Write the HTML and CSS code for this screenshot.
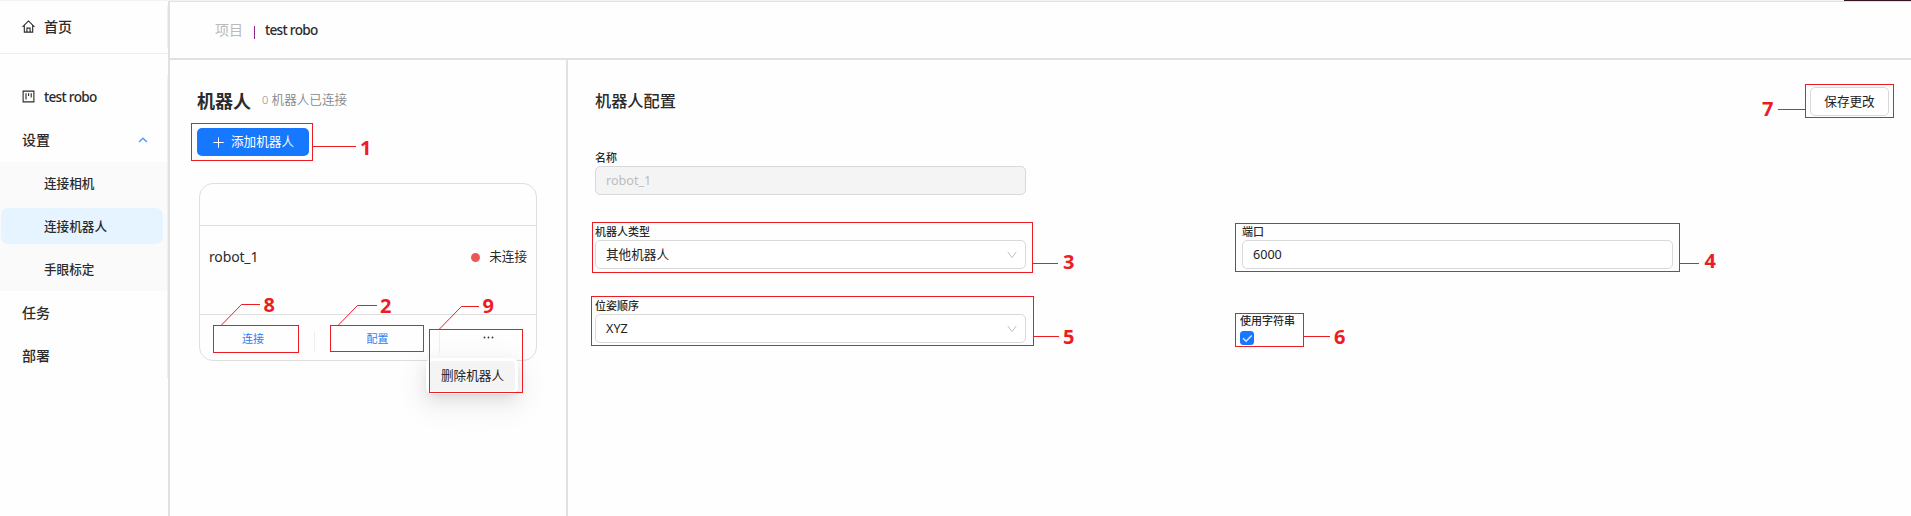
FILE: index.html
```html
<!DOCTYPE html>
<html lang="zh-CN">
<head>
<meta charset="utf-8">
<title>机器人配置</title>
<link rel="stylesheet" href="styles.css">
</head>
<body>
<div class="topline"><span class="topline-dark"></span></div>
<div class="app">
  <aside class="sidebar">
    <nav class="home-menu">
      <a class="item"><svg class="icon" viewBox="0 0 14 14"><path d="M.6 7.5 7 1l6.4 6.5M2.5 6v7h9V6M5.300 13V8.800h3.400V13"/></svg><span>首页</span></a>
    </nav>
    <nav class="main-menu">
      <a class="item"><svg class="icon" viewBox="0 0 14 14"><path d="M1.200 1.200h11.600v11.600H1.200zM4.300 3.500v6.600M7.100 3.500v3M9.900 3.500v4.600"/></svg><span class="latin">test robo</span></a>
      <a class="item group"><span>设置</span><svg class="caret" viewBox="0 0 10 6"><path d="M1 5l4-3.8L9 5"/></svg></a>
      <div class="submenu">
        <a class="subitem">连接相机</a>
        <a class="subitem selected">连接机器人</a>
        <a class="subitem">手眼标定</a>
      </div>
      <a class="item">任务</a>
      <a class="item">部署</a>
    </nav>
  </aside>
  <main class="main">
    <header class="header"><span class="crumb">项目</span><span class="sep"></span><span class="crumb-current latin">test robo</span></header>
    <div class="content">
      <section class="robots">
        <div class="robots-head"><h1>机器人</h1><span class="count"><small>0</small> 机器人已连接</span></div>
        <button class="add"><svg viewBox="0 0 11 11"><path d="M5.5 .3v10.4M.3 5.5h10.4"/></svg><span>添加机器人</span></button>
        <article class="card">
          <div class="card-head"></div>
          <div class="card-body"><span class="robot-name">robot_1</span><span class="status"><i class="dot"></i>未连接</span></div>
          <div class="card-actions">
            <a>连接</a><a>配置</a>
            <a class="more"><svg viewBox="0 0 11 3"><circle cx="1.5" cy="1.5" r=".9"/><circle cx="5.5" cy="1.5" r=".9"/><circle cx="9.5" cy="1.5" r=".9"/></svg></a>
            <div class="dropdown"><div class="dropdown-item">删除机器人</div></div>
          </div>
        </article>
      </section>
      <section class="config">
        <div class="config-head"><h2>机器人配置</h2><button class="save">保存更改</button></div>
        <form class="form">
          <div class="field wide"><label>名称</label><div class="control disabled">robot_1</div></div>
          <div class="field"><label>机器人类型</label><div class="control">其他机器人<svg class="arrow" viewBox="0 0 10 8"><path d="M.8 1 5 6.6 9.2 1"/></svg></div></div>
          <div class="field"><label>端口</label><div class="control">6000</div></div>
          <div class="field"><label>位姿顺序</label><div class="control">XYZ<svg class="arrow" viewBox="0 0 10 8"><path d="M.8 1 5 6.6 9.2 1"/></svg></div></div>
          <div class="field check-field"><label>使用字符串</label><span class="checkbox"><svg viewBox="0 0 14 14"><path d="M3 7.2l3.1 3.1L11.7 4.4"/></svg></span></div>
        </form>
      </section>
    </div>
  </main>
</div>
<svg class="notes" viewBox="0 0 1911 516">
  <g class="marks">
    <rect x="191.5" y="123.5" width="121" height="37"/><path d="M313 146.5h43"/>
    <rect x="330.5" y="325.5" width="93" height="26"/><path d="M338.500 325l19-19.500h19.500"/>
    <rect x="592.5" y="222.500" width="440" height="50"/><path d="M1033 263.500h25"/>
    <rect x="1235.500" y="223.500" width="444" height="48"/><path d="M1680 263.500h19"/>
    <rect x="591.500" y="296.500" width="442" height="49"/><path d="M1034 336.500h25"/>
    <rect x="1235.500" y="313.500" width="68" height="33"/><path d="M1304 336.500h26"/>
    <rect x="1805.500" y="84.500" width="88" height="33"/><path d="M1778 109.500h27"/>
    <rect x="213.500" y="325.500" width="85" height="27"/><path d="M221.500 325l20-20.500h18.500"/>
    <rect x="429.500" y="329.500" width="93" height="63"/><path d="M439.500 329l22-22.500h17.500"/>
  </g>
  <g class="numbers">
    <text x="360" y="155">1</text><text x="380" y="313">2</text><text x="1063" y="269">3</text>
    <text x="1704.500" y="268">4</text><text x="1063" y="344">5</text><text x="1334" y="344">6</text>
    <text x="1762" y="116">7</text><text x="263.500" y="312">8</text><text x="482.500" y="313">9</text>
  </g>
</svg>
</body>
</html>
```

FILE: styles.css
```css
* { box-sizing: border-box; }
body {
  margin: 0;
  width: 1911px;
  height: 516px;
  overflow: hidden;
  display: flex;
  flex-direction: column;
  background: #fefefe;
  color: #2b2b2b;
  font-family: "Noto Sans", "Noto Sans CJK SC", sans-serif;
  font-size: 12.6px;
  line-height: 20px;
}
h1, h2 { margin: 0; }
button { font: inherit; padding: 0; }
svg { display: block; fill: none; stroke: currentColor; flex: none; }

.topline { height: 1px; background: #f3f3f3; display: flex; justify-content: flex-end; }
.topline-dark { width: 67px; background: #351426; }
.app { flex: 1; display: flex; min-height: 0; }

.sidebar { width: 170px; border-right: 2px solid #e1e1e1; flex: none; }
.home-menu { height: 53px; padding: 4px 0 5px; border-bottom: 1px solid #eee; }
.home-menu .item { height: 43px; margin: 0; border-right: 1px solid #f0f0f0; }
.main-menu { margin-top: 21px; height: 303px; border-right: 1px solid #f0f0f0; }
.item {
  height: 43px;
  padding-left: 22px;
  display: flex;
  align-items: center;
  gap: 9px;
  font-size: 14px;
  font-weight: 500;
}
.icon { width: 13px; height: 13px; stroke-width: 1.2; }
.latin { font-size: 13.6px; letter-spacing: -.7px; }
.group { justify-content: space-between; padding-right: 19px; height: 44px; }
.caret { width: 10px; height: 6px; color: #4b9bff; stroke-width: 1.4; }
.submenu { height: 129px; background: #fafafa; padding-top: 3px; }
.subitem {
  display: flex;
  align-items: center;
  height: 36px;
  margin: 0 4px 7px 1px;
  padding: 1px 0 0 43px;
  border-radius: 7px;
  font-weight: 500;
}
.selected { background: #e6f4ff; }

.main { flex: 1; display: flex; flex-direction: column; min-width: 0; }
.header {
  height: 59px;
  border-top: 1px solid #e1e1e1;
  border-bottom: 2px solid #e1e1e1;
  padding: 0 0 1px 45px;
  display: flex;
  align-items: center;
  font-size: 14px;
}
.crumb { color: #bababa; }
.sep { width: 1px; height: 13px; background: #92278f; margin: 5px 10px 0 11px; }
.crumb-current { font-weight: 500; }
.content { flex: 1; display: flex; }

.robots { width: 398px; border-right: 2px solid #e1e1e1; padding: 30px 0 0 27px; flex: none; }
.robots-head { display: flex; align-items: center; gap: 11px; height: 22px; }
h1 { font-size: 18px; font-weight: 700; line-height: 22px; }
.count { color: #888; font-weight: 350; padding-bottom: 2px; }
.count small { font-size: 11px; }
.add {
  width: 112px;
  height: 28px;
  margin-top: 16px;
  padding-left: 16px;
  border: 0;
  border-radius: 5px;
  background: #1677ff;
  color: #fff;
  display: flex;
  align-items: center;
  gap: 7px;
}
.add svg { width: 11px; height: 11px; }
.card { width: 338px; height: 178px; margin: 27px 0 0 2px; border: 1px solid #dedede; border-radius: 14px; }
.card-head { height: 42px; border-bottom: 1px solid #dedede; }
.card-body {
  height: 89px;
  padding: 0 9px 26px 9px;
  border-bottom: 1px solid #dedede;
  display: flex;
  align-items: center;
  justify-content: space-between;
}
.robot-name { font-size: 14px; letter-spacing: -.15px; }
.status { display: flex; align-items: center; gap: 9px; }
.dot { width: 9px; height: 9px; border-radius: 50%; background: #eb5757; }
.card-actions {
  position: relative;
  height: 45px;
  padding: 16px 0 6px;
  display: grid;
  grid-template-columns: 115px 125px 1fr;
  color: #2f7cf0;
  font-size: 11px;
}
.card-actions a { display: flex; justify-content: center; align-items: center; height: 22px; padding-bottom: 6px; border-right: 1px solid #eee; }
.card-actions a:first-child { padding-right: 8px; }
.card-actions a:nth-child(2) { padding-left: 1px; }
.card-actions .more { border: 0; color: #333; padding: 0 0 9px 0; }
.more svg { width: 11px; height: 3px; fill: currentColor; stroke: none; }
.dropdown {
  position: absolute;
  left: 226px;
  top: 43px;
  width: 92px;
  height: 36px;
  padding: 3px 3px 3px 4px;
  border-radius: 6px;
  background: #fff;
  box-shadow: 0 6px 16px rgba(0,0,0,.08), 0 3px 6px -4px rgba(0,0,0,.12), 0 9px 28px 8px rgba(0,0,0,.05);
}
.dropdown-item { height: 30px; line-height: 29px; padding-left: 11px; background: #f4f4f4; border-radius: 4px; color: #222; font-size: 12.6px; white-space: nowrap; }

.config { flex: 1; padding: 27px 22px 0 27px; }
.config-head { height: 29px; display: flex; justify-content: space-between; align-items: center; }
h2 { font-size: 16.2px; font-weight: 500; padding-bottom: 1px; }
.save { width: 79px; height: 29px; border: 1px solid #d9d9d9; border-radius: 5px; background: #fff; color: #222; }
.form { display: grid; grid-template-columns: 431px 431px; column-gap: 216px; padding-top: 33px; }
.field { height: 74px; }
.field label { display: block; height: 17px; line-height: 18px; font-size: 11px; font-weight: 500; }
.wide { grid-column: 1 / -1; width: 431px; }
.control {
  height: 29px;
  padding: 0 8px 0 10px;
  border: 1px solid #d9d9d9;
  border-radius: 5px;
  background: #fff;
  display: flex;
  align-items: center;
  justify-content: space-between;
  color: #222;
}
.disabled { background: #f4f4f4; color: #bcbcbc; }
.arrow { width: 10px; height: 8px; color: #bfbfbf; }
.check-field { margin-left: -2px; padding-top: 15px; }
.checkbox { display: block; width: 14px; height: 14px; margin-top: 2px; border-radius: 3.500px; background: #1677ff; color: #d6e8ff; }
.checkbox svg { stroke-width: 1.5; }

.notes { position: absolute; left: 0; top: 0; width: 1911px; height: 516px; pointer-events: none; }
.marks { stroke: #ed1c24; stroke-width: 1; }
.numbers { fill: #ed1c24; stroke: none; font-size: 20px; font-weight: 700; }
```
